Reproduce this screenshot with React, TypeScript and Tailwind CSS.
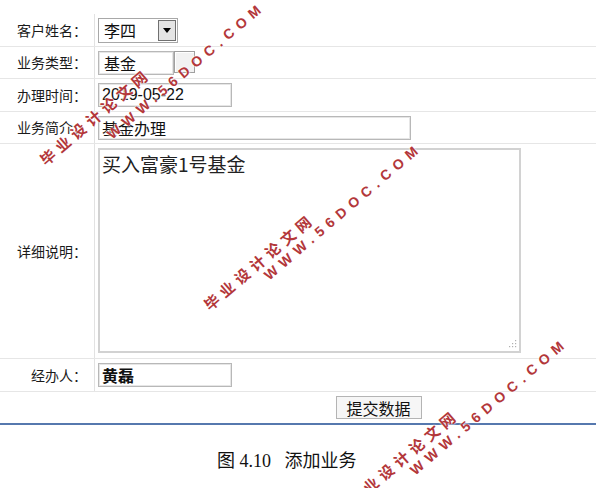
import React from 'react';

const sans = { fontFamily: '"Noto Sans CJK SC", "Liberation Sans", sans-serif' };
const latin = { fontFamily: '"Liberation Sans", sans-serif' };

const Row: React.FC<{ label: string; h: string; children: React.ReactNode }> = ({ label, h, children }) => (
  <div className={`flex border-b border-[#e6e6e6] ${h}`}>
    <div className="w-[95px] shrink-0 border-r border-[#e2e2e2] flex items-center justify-end pr-[7px] text-[14px] text-[#1a1a1a]">
      {label}
    </div>
    <div className="flex-1 flex items-center pl-[3px]">{children}</div>
  </div>
);

const Box: React.FC<{ w: string; children: React.ReactNode; bold?: boolean }> = ({ w, children, bold }) => (
  <div
    className={`${w} h-[24px] border border-[#b8b8b8] shadow-[inset_0_0_0_1px_#e6e6e6] bg-white flex items-center pl-[3px] text-[16px] leading-none text-[#111] ${bold ? 'font-semibold' : ''}`}
  >
    {children}
  </div>
);

const App: React.FC = () => {
  return (
    <div className="relative w-[596px] h-[488px] overflow-hidden bg-white" style={sans}>
      <div className="w-[662px] pt-[14px]">
        <Row label="客户姓名：" h="h-[33px]">
          <div className="relative w-[80px] h-[25px] border border-[#a8a8a8] bg-white flex items-center pl-[5px] text-[16px] leading-none text-[#111]">
            李四
            <div className="absolute right-[1px] top-[1px] w-[18px] h-[21px] bg-[#e4e4e4] border border-[#707070] flex items-center justify-center">
              <svg width="8" height="5" viewBox="0 0 8 5">
                <path d="M0 0 H8 L4 5 Z" fill="#000" />
              </svg>
            </div>
          </div>
        </Row>
        <Row label="业务类型：" h="h-[32px]">
          <div className="flex items-start h-[24px]">
            <div className="w-[76px] h-[24px] border border-[#b8b8b8] shadow-[inset_0_0_0_1px_#e6e6e6] bg-white flex items-center pl-[5px] text-[16px] leading-none text-[#111]">
              基金
            </div>
            <div className="w-[21px] h-[22px] border border-[#a0a0a0] bg-[#f2f2f2] shadow-[inset_1px_1px_0_#fff]" />
          </div>
        </Row>
        <Row label="办理时间：" h="h-[33px]">
          <Box w="w-[134px]">
            <span style={latin}>2019-05-22</span>
          </Box>
        </Row>
        <Row label="业务简介：" h="h-[32px]">
          <Box w="w-[313px]">基金办理</Box>
        </Row>
        <div className="flex border-b border-[#e6e6e6] h-[215px]">
          <div className="w-[95px] shrink-0 border-r border-[#e2e2e2] flex items-center justify-end pr-[7px] text-[14px] text-[#1a1a1a]">
            详细说明：
          </div>
          <div className="flex-1 pl-[3px] pt-[4px]">
            <div className="relative w-[423px] h-[205px] border-2 border-[#d2d2d2] bg-white pl-[2px] pt-[1px] text-[19px] leading-[26px] text-[#222]">
              买入富豪1号基金
              <svg className="absolute right-[2px] bottom-[1px]" width="10" height="10" viewBox="0 0 10 10">
                <g fill="#b0b0b0">
                  <rect x="8" y="0" width="1.2" height="1.2" />
                  <rect x="5" y="3" width="1.2" height="1.2" />
                  <rect x="8" y="3" width="1.2" height="1.2" />
                  <rect x="2" y="6" width="1.2" height="1.2" />
                  <rect x="5" y="6" width="1.2" height="1.2" />
                  <rect x="8" y="6" width="1.2" height="1.2" />
                </g>
              </svg>
            </div>
          </div>
        </div>
        <Row label="经办人：" h="h-[33px]">
          <Box w="w-[134px]" bold>
            黄磊
          </Box>
        </Row>
        <div className="flex h-[31px] items-center">
          <div className="w-[95px] shrink-0" />
          <div className="flex-1 flex justify-center">
            <div className="w-[86px] h-[23px] border border-[#b4b4b4] bg-[#f6f6f6] flex items-center justify-center text-[16px] leading-none text-[#111]">
              提交数据
            </div>
          </div>
        </div>
      </div>
      <div className="h-[2px] bg-[#5678ae]" />
      <div
        className="mt-[25px] pl-[217px] text-[18px] leading-[22px] text-[#111] whitespace-pre"
        style={{ fontFamily: '"Liberation Serif", "Noto Sans CJK SC", serif' }}
      >
        {'图 4.10   添加业务'}
      </div>

      {/* watermark */}
      <div className="pointer-events-none text-[#b3373a] font-bold leading-[18px] [text-shadow:0_0_2px_#fff,0_0_2px_#fff]">
        <span className="absolute left-[42px] top-[153px] origin-left rotate-[-40.5deg] whitespace-nowrap text-[15px] tracking-[5px]">
          毕业设计论文网
        </span>
        <span
          className="absolute left-[109px] top-[127px] origin-left rotate-[-40.5deg] whitespace-nowrap text-[14px] tracking-[5.9px]"
          style={latin}
        >
          WWW.56DOC.COM
        </span>
        <span className="absolute left-[206px] top-[298px] origin-left rotate-[-40.5deg] whitespace-nowrap text-[15px] tracking-[5px]">
          毕业设计论文网
        </span>
        <span
          className="absolute left-[266px] top-[268px] origin-left rotate-[-40.5deg] whitespace-nowrap text-[14px] tracking-[5.9px]"
          style={latin}
        >
          WWW.56DOC.COM
        </span>
        <span className="absolute left-[350px] top-[494px] origin-left rotate-[-40.5deg] whitespace-nowrap text-[15px] tracking-[5px]">
          毕业设计论文网
        </span>
        <span
          className="absolute left-[412px] top-[463px] origin-left rotate-[-40.5deg] whitespace-nowrap text-[14px] tracking-[5.9px]"
          style={latin}
        >
          WWW.56DOC.COM
        </span>
      </div>
    </div>
  );
};

export default App;
